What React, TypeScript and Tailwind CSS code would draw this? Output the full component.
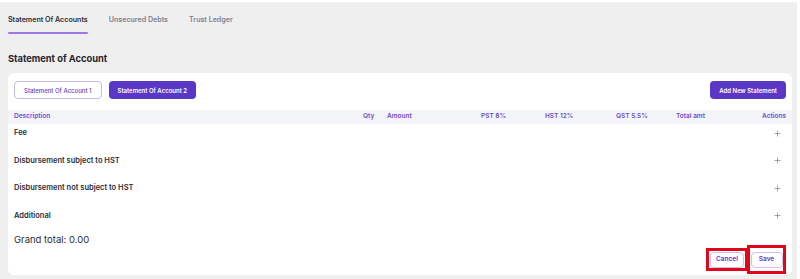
import { Plus } from 'lucide-react';

const columns = [
  { label: 'Qty', cls: 'w-[24px] text-left' },
  { label: 'Amount', cls: 'w-[94px] text-left' },
  { label: 'PST 8%', cls: 'w-[64px] text-left' },
  { label: 'HST 12%', cls: 'w-[71px] text-left' },
  { label: 'QST 5.5%', cls: 'w-[60px] text-left' },
  { label: 'Total amt', cls: 'w-[86px] text-left' },
];

const sections = ['Fee', 'Disbursement subject to HST', 'Disbursement not subject to HST', 'Additional'];

function App() {
  return (
    <div
      className="w-[800px] h-[279px] bg-white pt-[2px] pr-[3px] overflow-hidden"
      style={{ fontFamily: 'Inter, "Noto Sans", sans-serif' }}
    >
      <div className="h-full bg-[#efefef] flex flex-col">
        {/* Tabs */}
        <div className="flex gap-[21px] px-[8px] pt-[13px]">
          <div className="flex flex-col">
            <span className="text-[7.1px] font-semibold text-[#2d2d3a] leading-[10px]">Statement Of Accounts</span>
            <div className="mt-[7px] h-[2px] bg-[#9a78e6] rounded-full" />
          </div>
          <span className="text-[7.1px] font-semibold text-[#7d7f8d] leading-[10px]">Unsecured Debts</span>
          <span className="text-[7.1px] font-semibold text-[#7d7f8d] leading-[10px]">Trust Ledger</span>
        </div>

        <h2 className="px-[8px] mt-[18px] text-[9.3px] font-bold text-[#25252f] leading-[14px]">Statement of Account</h2>

        {/* Card */}
        <div className="ml-[8px] mt-[7px] mr-[5px] bg-white rounded-[6px] flex-1 mb-[4px] flex flex-col">
          <div className="flex items-center justify-between px-[6px] pt-[8px]">
            <div className="flex gap-[7px]">
              <button className="h-[18px] px-[9px] rounded-[4px] border border-[#c8b9ef] text-[6px] font-medium text-[#5b3fbf] bg-white">
                Statement Of Account 1
              </button>
              <button className="h-[18px] px-[9px] rounded-[4px] bg-[#5a37c4] text-[6px] font-semibold text-white">
                Statement Of Account 2
              </button>
            </div>
            <button className="h-[18px] px-[9px] rounded-[4px] bg-[#5a37c4] text-[6px] font-semibold text-white">
              Add New Statement
            </button>
          </div>

          {/* Header row */}
          <div className="mt-[11px] h-[14px] bg-[#f4f5f9] flex items-center px-[6px] text-[6.5px] font-semibold text-[#6a4fd0]">
            <span className="flex-1">Description</span>
            {columns.map((c) => (
              <span key={c.label} className={c.cls}>{c.label}</span>
            ))}
            <span className="w-[24px] text-right">Actions</span>
          </div>

          {sections.map((s) => (
            <div key={s} className="h-[27.5px] flex items-start justify-between px-[6px] pr-[10px] pt-[4px]">
              <span className="text-[7.5px] font-semibold text-[#2d2d3a] leading-[10px]">{s}</span>
              <Plus className="w-[9px] h-[9px] mt-[0.5px] text-[#6b6f7c]" strokeWidth={1.6} />
            </div>
          ))}

          <div className="px-[6px] text-[9.5px] text-[#2d2d3a] leading-[12px]">Grand total: 0.00</div>

          <div className="flex justify-end items-center pr-[6px] mt-[-1px]">
            <div className="w-[42px] h-[23px] border-[3px] border-[#e2061b] flex items-center justify-end pr-[1px]">
              <button className="h-[16px] w-[34px] rounded-[4px] border border-[#cdbff0] text-[6.5px] font-semibold text-[#5a37c4] bg-white">
                Cancel
              </button>
            </div>
            <div className="w-[39px] h-[29px] border-[3px] border-[#e2061b] ml-[-1px] flex items-center justify-center">
              <button className="h-[16px] w-[32px] rounded-[4px] border border-[#cdbff0] text-[6.5px] font-semibold text-[#5a37c4] bg-white">
                Save
              </button>
            </div>
          </div>
        </div>
      </div>
    </div>
  );
}

export default App;
